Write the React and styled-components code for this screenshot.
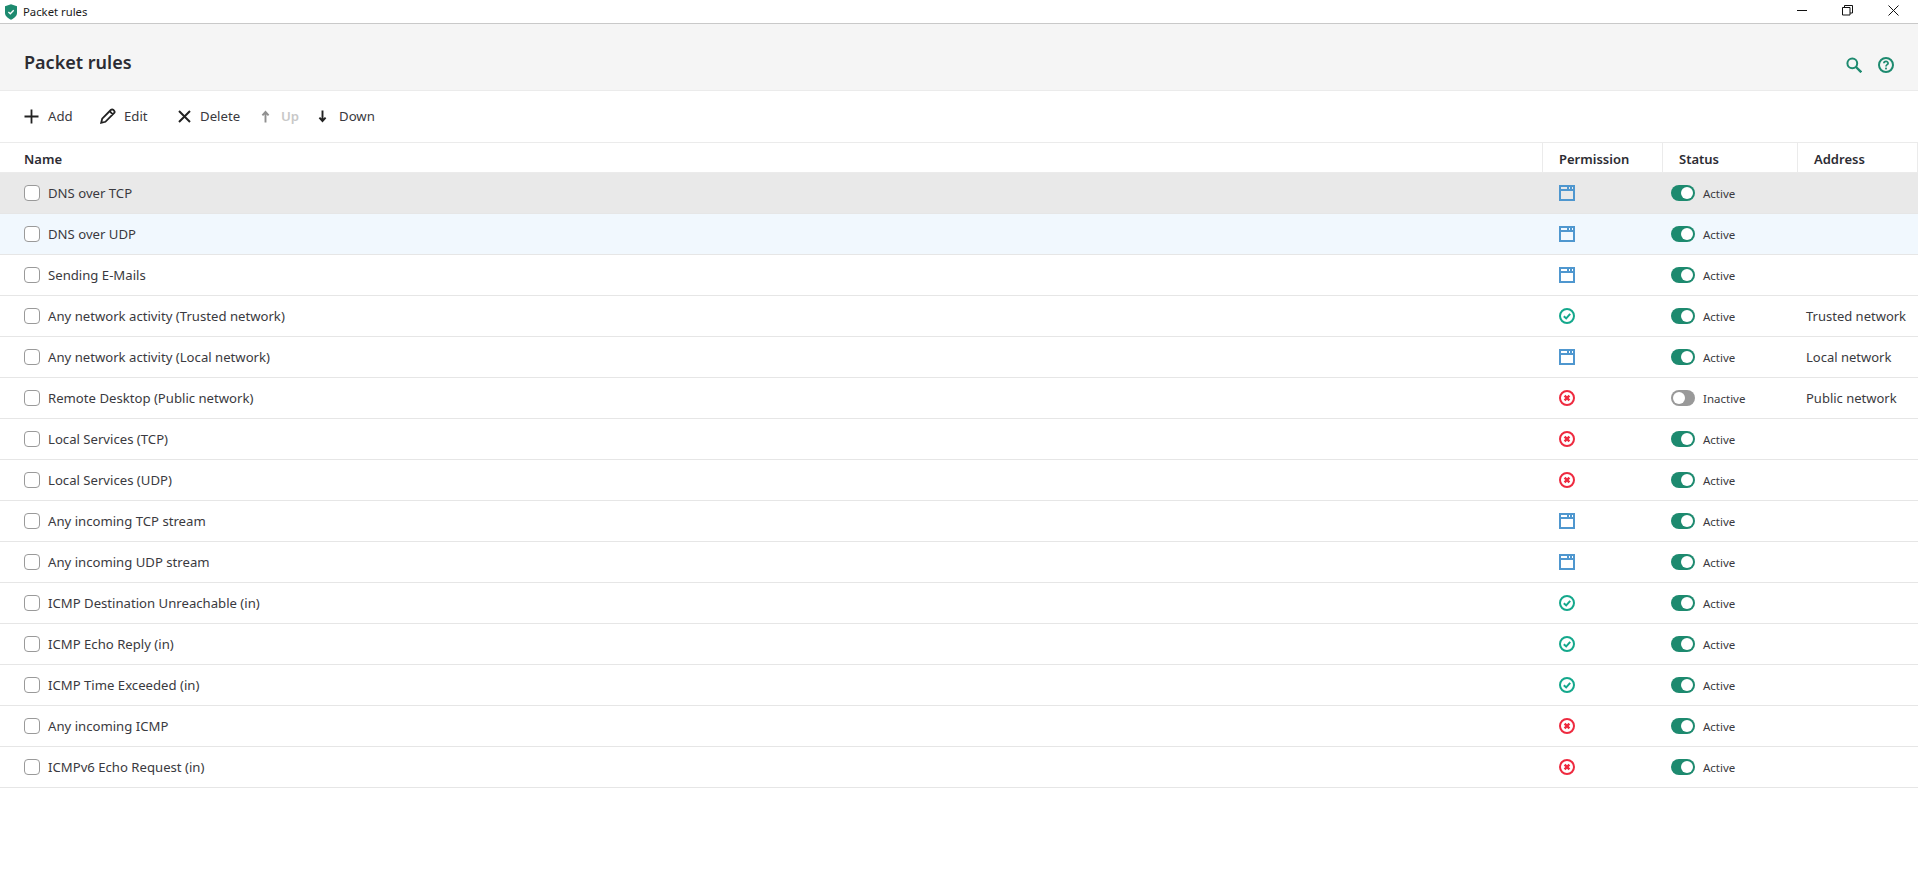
import React from 'react'
import styled, { createGlobalStyle } from 'styled-components'

const FONT = '"Noto Sans", "Open Sans", sans-serif'
const GREEN = '#1d8a6f'

const rules = [
  { name: 'DNS over TCP', perm: 'ask', active: true, hover: true },
  { name: 'DNS over UDP', perm: 'ask', active: true, selected: true },
  { name: 'Sending E-Mails', perm: 'ask', active: true },
  { name: 'Any network activity (Trusted network)', perm: 'allow', active: true, address: 'Trusted network' },
  { name: 'Any network activity (Local network)', perm: 'ask', active: true, address: 'Local network' },
  { name: 'Remote Desktop (Public network)', perm: 'block', active: false, address: 'Public network' },
  { name: 'Local Services (TCP)', perm: 'block', active: true },
  { name: 'Local Services (UDP)', perm: 'block', active: true },
  { name: 'Any incoming TCP stream', perm: 'ask', active: true },
  { name: 'Any incoming UDP stream', perm: 'ask', active: true },
  { name: 'ICMP Destination Unreachable (in)', perm: 'allow', active: true },
  { name: 'ICMP Echo Reply (in)', perm: 'allow', active: true },
  { name: 'ICMP Time Exceeded (in)', perm: 'allow', active: true },
  { name: 'Any incoming ICMP', perm: 'block', active: true },
  { name: 'ICMPv6 Echo Request (in)', perm: 'block', active: true },
]

const GlobalStyle = createGlobalStyle`
  html, body { margin: 0; padding: 0; background: #fff; overflow: hidden; }
  body { font-family: ${FONT}; color: #2c2c33; }
`

const Window = styled.div`
  width: 1918px;
  height: 886px;
  display: flex;
  flex-direction: column;
`
const TitleBar = styled.div`
  height: 23px;
  flex: none;
  display: flex;
  align-items: center;
  padding-left: 4px;
  border-bottom: 1px solid #c9c9c9;
`
const TitleText = styled.span`
  font-size: 11.3px;
  margin-left: 5px;
  color: #1a1a1a;
`
const WinButtons = styled.div`
  margin-left: auto;
  display: flex;
  align-items: center;
  height: 100%;
  padding: 0 2px 3px 0;
  box-sizing: border-box;
`
const WinButton = styled.div`
  width: 45.5px;
  height: 100%;
  display: flex;
  align-items: center;
  justify-content: center;
`
const Header = styled.div`
  height: 66px;
  flex: none;
  display: flex;
  align-items: center;
  padding: 0 24px;
  background: #f5f5f5;
  border-bottom: 1px solid #ebebeb;
  box-sizing: content-box;
`
const Title = styled.h1`
  margin: 0;
  padding-top: 10px;
  font-size: 18px;
  font-weight: 600;
  color: #2c2c33;
  flex: 1;
`
const HeaderIcons = styled.div`
  display: flex;
  gap: 16px;
  margin-top: 16px;
`
const Toolbar = styled.div`
  height: 50px;
  padding-bottom: 1px;
  flex: none;
  display: flex;
  align-items: center;
  padding-left: 24px;
  border-bottom: 1px solid #ebebeb;
`
const ToolButton = styled.div`
  display: flex;
  align-items: center;
  gap: ${p => p.$gap || 9}px;
  width: ${p => p.$width}px;
  font-size: 13.2px;
  font-weight: ${p => (p.$disabled ? 600 : 400)};
  color: ${p => (p.$disabled ? '#c8c8c8' : '#3a3a40')};
`
const GridRow = styled.div`
  display: grid;
  grid-template-columns: 1543px 120px 135px 120px;
  align-items: center;
`
const HeadRow = styled(GridRow)`
  height: 29px;
  align-items: stretch;
  border-bottom: 1px solid #ebebeb;
`
const HeadCell = styled.div`
  display: flex;
  align-items: center;
  font-size: 13px;
  font-weight: 600;
  padding: 2px 0 0 ${p => p.$pad}px;
  border-right: 1px solid #ebebeb;
  box-sizing: border-box;
`
const Row = styled(GridRow)`
  height: 40px;
  border-bottom: 1px solid #e6e6e6;
  background: ${p => (p.$hover ? '#e9e9e9' : p.$selected ? '#f1f8fe' : '#fff')};
`
const NameCell = styled.div`
  display: flex;
  align-items: center;
  gap: 8px;
  padding-left: 24px;
  font-size: 13.15px;
  color: #3a3a40;
`
const Checkbox = styled.span`
  width: 14px;
  height: 14px;
  border: 1px solid #9a9a9a;
  border-radius: 4px;
  background: #fff;
  flex: none;
`
const PermCell = styled.div`
  display: flex;
  padding-left: 16px;
`
const StatusCell = styled.div`
  display: flex;
  align-items: center;
  gap: 8px;
  padding-left: 8px;
  font-size: 11.5px;
  color: #3a3a40;
`
const Toggle = styled.span`
  width: 24px;
  height: 16px;
  border-radius: 8px;
  background: ${p => (p.$on ? GREEN : '#999')};
  display: flex;
  align-items: center;
  justify-content: ${p => (p.$on ? 'flex-end' : 'flex-start')};
  padding: 0 2px;
  box-sizing: border-box;
  flex: none;
  &::after {
    content: '';
    width: 12px;
    height: 12px;
    border-radius: 50%;
    background: #fff;
  }
`
const AddressCell = styled.div`
  padding-left: 8px;
  font-size: 13px;
  color: #3a3a40;
  white-space: nowrap;
`

const ShieldLogo = () => (
  <svg width="14" height="16" viewBox="0 0 14 16">
    <path d="M7 0.3 L13 2.3 V9 C13 12 10 14.4 7 15.7 C4 14.4 1 12 1 9 V2.3 Z" fill="#1d8a6f" />
    <path d="M4.4 8 L6.3 9.8 L9.7 6.2" fill="none" stroke="#fff" strokeWidth="1.3" />
  </svg>
)
const AskIcon = () => (
  <svg width="16" height="16" viewBox="0 0 16 16">
    <path d="M0 0h16v16H0z M2 6v8h12V6z M2 2v2h6V2z M10 2v2h1V2z M13 2v2h1V2z" fill="#4f97cf" fillRule="evenodd" />
  </svg>
)
const AllowIcon = () => (
  <svg width="16" height="16" viewBox="0 0 16 16">
    <circle cx="8" cy="8" r="7" fill="none" stroke="#14a88c" strokeWidth="2" />
    <path d="M4.8 8.2 L7.2 10.4 L11.2 5.8" fill="none" stroke="#14a88c" strokeWidth="2" />
  </svg>
)
const BlockIcon = () => (
  <svg width="16" height="16" viewBox="0 0 16 16">
    <circle cx="8" cy="8" r="7" fill="none" stroke="#ee2a3f" strokeWidth="2" />
    <path d="M5.6 5.6 L10.4 10.4 M10.4 5.6 L5.6 10.4" fill="none" stroke="#ee2a3f" strokeWidth="2.4" />
  </svg>
)
const permIcons = { ask: AskIcon, allow: AllowIcon, block: BlockIcon }

const App = () => (
  <Window>
    <GlobalStyle />
    <TitleBar>
      <ShieldLogo />
      <TitleText>Packet rules</TitleText>
      <WinButtons>
        <WinButton>
          <svg width="11" height="11" viewBox="0 0 11 11"><path d="M0 5.5h10" stroke="#111" /></svg>
        </WinButton>
        <WinButton>
          <svg width="11" height="11" viewBox="0 0 11 11">
            <path d="M0.5 2.5h7.5v7.5H0.5z M2.5 2.5V0.5H10.5V8H8" fill="none" stroke="#111" />
          </svg>
        </WinButton>
        <WinButton>
          <svg width="11" height="11" viewBox="0 0 11 11"><path d="M0.5 0.5l10 10M10.5 0.5l-10 10" stroke="#111" /></svg>
        </WinButton>
      </WinButtons>
    </TitleBar>
    <Header>
      <Title>Packet rules</Title>
      <HeaderIcons>
        <svg width="16" height="16" viewBox="0 0 16 16">
          <circle cx="6.3" cy="6.3" r="4.9" fill="none" stroke={GREEN} strokeWidth="2" />
          <path d="M10 10 L15.3 15.3" stroke={GREEN} strokeWidth="2.4" />
        </svg>
        <svg width="16" height="16" viewBox="0 0 16 16">
          <circle cx="8" cy="8" r="7" fill="none" stroke={GREEN} strokeWidth="2" />
          <path d="M5.9 6.3 C5.9 3.8 10.1 3.8 10.1 6.2 C10.1 7.8 8 7.6 8 9.5" fill="none" stroke={GREEN} strokeWidth="1.7" />
          <rect x="7.1" y="10.6" width="1.8" height="1.8" fill={GREEN} />
        </svg>
      </HeaderIcons>
    </Header>
    <Toolbar>
      <ToolButton $width={76}>
        <svg width="15" height="15" viewBox="0 0 15 15"><path d="M7.5 0.5v14M0.5 7.5h14" stroke="#222" strokeWidth="1.8" /></svg>
        Add
      </ToolButton>
      <ToolButton $width={77} $gap={8}>
        <svg width="16" height="16" viewBox="0 0 16 16">
          <path d="M1.2 14.8 L2.2 10.6 L10.8 2 C11.6 1.2 12.6 1.2 13.4 2 L14 2.6 C14.8 3.4 14.8 4.4 14 5.2 L5.4 13.8 Z M9.6 3.2 L12.8 6.4" fill="none" stroke="#222" strokeWidth="1.8" />
        </svg>
        Edit
      </ToolButton>
      <ToolButton $width={84} $gap={8}>
        <svg width="15" height="15" viewBox="0 0 15 15"><path d="M2 2 L13 13 M13 2 L2 13" stroke="#222" strokeWidth="2" /></svg>
        Delete
      </ToolButton>
      <ToolButton $width={57} $gap={11} $disabled>
        <svg width="9" height="13" viewBox="0 0 9 13"><path d="M4.5 12.5V2M1.4 5.4 L4.5 2 L7.6 5.4" fill="none" stroke="#909090" strokeWidth="1.9" /></svg>
        Up
      </ToolButton>
      <ToolButton $width={70} $gap={12}>
        <svg width="9" height="13" viewBox="0 0 9 13"><path d="M4.5 0.5V11M1.4 7.6 L4.5 11 L7.6 7.6" fill="none" stroke="#222" strokeWidth="1.9" /></svg>
        Down
      </ToolButton>
    </Toolbar>
    <HeadRow>
      <HeadCell $pad={24}>Name</HeadCell>
      <HeadCell $pad={16}>Permission</HeadCell>
      <HeadCell $pad={16}>Status</HeadCell>
      <HeadCell $pad={16}>Address</HeadCell>
    </HeadRow>
    {rules.map(rule => {
      const PermIcon = permIcons[rule.perm]
      return (
        <Row key={rule.name} $hover={rule.hover} $selected={rule.selected}>
          <NameCell><Checkbox />{rule.name}</NameCell>
          <PermCell><PermIcon /></PermCell>
          <StatusCell><Toggle $on={rule.active} />{rule.active ? 'Active' : 'Inactive'}</StatusCell>
          <AddressCell>{rule.address}</AddressCell>
        </Row>
      )
    })}
  </Window>
)

export default App
